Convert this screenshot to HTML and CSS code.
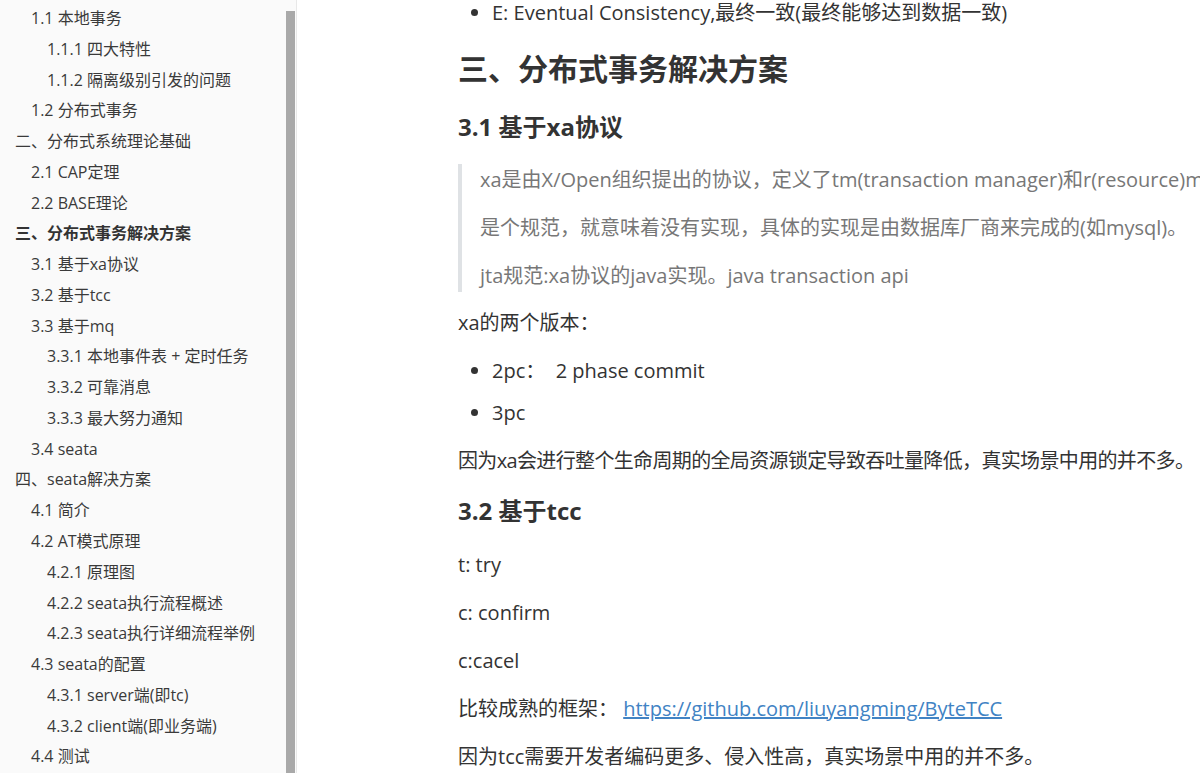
FILE: index.html
```html
<!DOCTYPE html>
<html lang="zh-CN">
<head>
<meta charset="utf-8">
<title>分布式事务</title>
<link rel="stylesheet" href="styles.css">
</head>
<body>
<div class="app">
  <aside class="sidebar">
    <nav class="outline">
      <div class="item l2">1.1 本地事务</div>
      <div class="item l3">1.1.1 四大特性</div>
      <div class="item l3">1.1.2 隔离级别引发的问题</div>
      <div class="item l2">1.2 分布式事务</div>
      <div class="item l1">二、分布式系统理论基础</div>
      <div class="item l2">2.1 CAP定理</div>
      <div class="item l2">2.2 BASE理论</div>
      <div class="item l1 active">三、分布式事务解决方案</div>
      <div class="item l2">3.1 基于xa协议</div>
      <div class="item l2">3.2 基于tcc</div>
      <div class="item l2">3.3 基于mq</div>
      <div class="item l3">3.3.1 本地事件表 + 定时任务</div>
      <div class="item l3">3.3.2 可靠消息</div>
      <div class="item l3">3.3.3 最大努力通知</div>
      <div class="item l2">3.4 seata</div>
      <div class="item l1">四、seata解决方案</div>
      <div class="item l2">4.1 简介</div>
      <div class="item l2">4.2 AT模式原理</div>
      <div class="item l3">4.2.1 原理图</div>
      <div class="item l3">4.2.2 seata执行流程概述</div>
      <div class="item l3">4.2.3 seata执行详细流程举例</div>
      <div class="item l2">4.3 seata的配置</div>
      <div class="item l3">4.3.1 server端(即tc)</div>
      <div class="item l3">4.3.2 client端(即业务端)</div>
      <div class="item l2">4.4 测试</div>
    </nav>
    <div class="scrollbar"><div class="thumb"></div></div>
  </aside>
  <main class="content">
    <div class="write">
      <ul class="list first">
        <li>E: Eventual Consistency,最终一致(最终能够达到数据一致)</li>
      </ul>
      <h2>三、分布式事务解决方案</h2>
      <h3>3.1 基于xa协议</h3>
      <blockquote>
        <p>xa是由X/Open组织提出的协议，定义了tm(transaction manager)和r(resource)m,</p>
        <p>是个规范，就意味着没有实现，具体的实现是由数据库厂商来完成的(如mysql)。</p>
        <p>jta规范:xa协议的java实现。java transaction api</p>
      </blockquote>
      <p class="after-quote">xa的两个版本：</p>
      <ul class="list">
        <li>2pc：&nbsp; 2 phase commit</li>
        <li>3pc</li>
      </ul>
      <p class="tight">因为xa会进行整个生命周期的全局资源锁定导致吞吐量降低，真实场景中用的并不多。</p>
      <h3 class="second">3.2 基于tcc</h3>
      <div class="tcc">
        <p>t: try</p>
        <p>c: confirm</p>
        <p>c:cacel</p>
        <p>比较成熟的框架： <a href="#">https://github.com/liuyangming/ByteTCC</a></p>
        <p>因为tcc需要开发者编码更多、侵入性高，真实场景中用的并不多。</p>
      </div>
    </div>
  </main>
</div>
</body>
</html>
```
FILE: styles.css
```css
html, body {
  margin: 0;
  padding: 0;
  height: 100%;
  overflow: hidden;
  background: #ffffff;
}
body {
  font-family: "Open Sans", "Noto Sans CJK SC", sans-serif;
  color: #333333;
}
.app {
  display: flex;
  height: 773px;
}
.sidebar {
  width: 297px;
  flex: none;
  display: flex;
  background: #fafafa;
  border-right: 1px solid #e8e8e8;
  box-sizing: border-box;
}
.outline {
  width: 286px;
  padding-top: 3px;
  overflow: hidden;
}
.item {
  font-size: 16px;
  line-height: 30.77px;
  height: 30.77px;
  white-space: nowrap;
  color: #3a3a3a;
}
.item.l1 { padding-left: 15px; }
.item.l2 { padding-left: 31px; }
.item.l3 { padding-left: 47px; }
.item.active { font-weight: bold; color: #333333; }
.scrollbar {
  width: 10px;
  flex: none;
  padding-top: 11px;
  box-sizing: border-box;
}
.thumb {
  width: 9px;
  height: 100%;
  background: #a9a9a9;
}
.content {
  flex: 1;
  overflow: hidden;
}
.write {
  margin-top: -3px;
  padding-left: 161px;
  font-size: 20px;
  line-height: 32px;
  white-space: nowrap;
}
.write p {
  margin: 15.75px 0;
}
.write p.after-quote {
  margin-top: 15px;
}
.write p.tight {
  margin-top: 15px;
  letter-spacing: -0.65px;
}
.write .tcc p {
  margin: 16px 0;
}
.list {
  margin: 16px 0;
  padding-left: 34px;
}
.list.first { margin-top: 0; }
.list li + li { margin-top: 10px; }
h2 {
  font-size: 30px;
  line-height: 42px;
  font-weight: bold;
  margin: 19px 0;
}
h3 {
  font-size: 24px;
  line-height: 36px;
  font-weight: bold;
  margin: 19px 0;
}
h3.second {
  margin: 16px 0 20px;
}
blockquote {
  margin: 18px 0 0;
  padding: 0 0 0 18px;
  border-left: 4px solid #dfe2e5;
  color: #777777;
}
blockquote p {
  margin: 15.5px 0;
}
.write blockquote p:first-child { margin-top: 0; }
.write blockquote p:last-child { margin-bottom: 0; }
a {
  color: #4183c4;
  text-decoration: underline;
}
```
